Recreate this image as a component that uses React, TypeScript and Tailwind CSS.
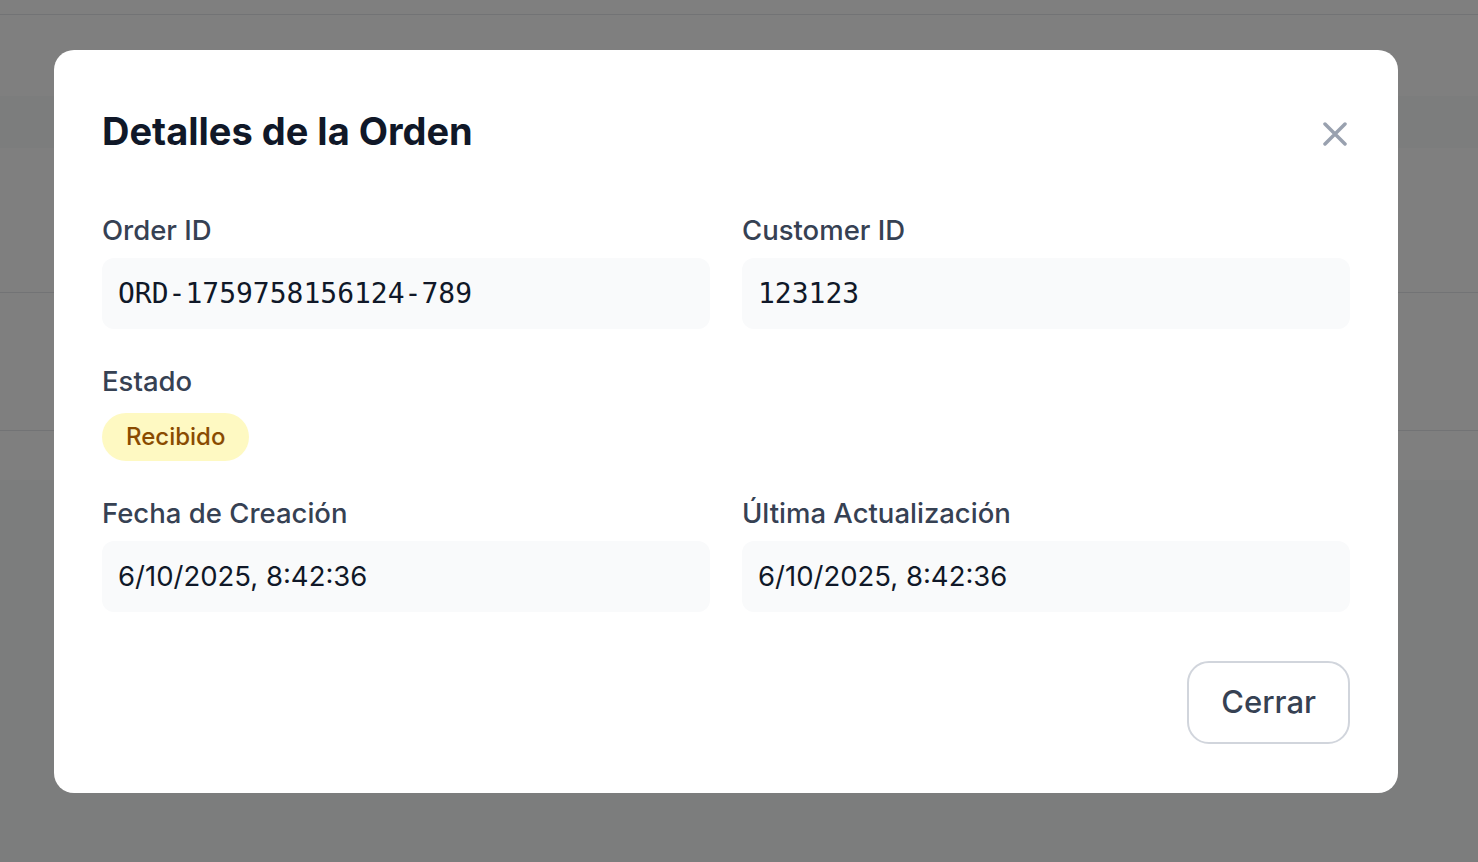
import React from "react";

const order = {
  id: "ORD-1759758156124-789",
  customerId: "123123",
  status: "Recibido",
  createdAt: "6/10/2025, 8:42:36",
  updatedAt: "6/10/2025, 8:42:36",
};

function Field({ label, value, mono }: { label: string; value: string; mono?: boolean }) {
  return (
    <div className="flex flex-col">
      <span className="text-[27.5px] leading-[32px] font-medium text-gray-700">{label}</span>
      <div
        className={`mt-3 h-[71px] rounded-xl bg-gray-50 px-4 flex items-center text-gray-900 ${
          mono ? "font-['DejaVu_Sans_Mono',monospace] text-[28px]" : "text-[27.5px]"
        }`}
      >
        {value}
      </div>
    </div>
  );
}

export default function App() {
  return (
    <div className="relative min-h-screen bg-gray-50 font-['Inter',sans-serif]">
      {/* page behind the modal */}
      <div className="h-[15px] bg-white border-b border-gray-200" />
      <div className="bg-white">
        <div className="h-[81px]" />
        <div className="h-[52px] bg-gray-50" />
        <div className="h-[145px] border-b border-gray-200" />
        <div className="h-[138px] border-b border-gray-200" />
        <div className="h-[49px]" />
      </div>

      {/* overlay */}
      <div className="fixed inset-0 bg-black/50 flex items-start pl-[54px] pt-[50px]">
        <div className="w-[1344px] bg-white rounded-[20px] px-12 pt-[61px] pb-[49px]">
          <div className="flex items-start justify-between">
            <h2 className="text-[38px] leading-[40px] font-bold text-gray-900">
              Detalles de la Orden
            </h2>
            <button className="mt-[11px] mr-[3px] text-gray-400" aria-label="Cerrar">
              <svg width="24" height="24" viewBox="0 0 24 24" fill="none" stroke="currentColor" strokeWidth="3.5" strokeLinecap="round">
                <path d="M2 2L22 22M22 2L2 22" />
              </svg>
            </button>
          </div>

          <div className="mt-[63px] grid grid-cols-2 gap-x-8">
            <Field label="Order ID" value={order.id} mono />
            <Field label="Customer ID" value={order.customerId} mono />
            <div className="col-span-2 mt-9 flex flex-col items-start">
              <span className="text-[27.5px] leading-[32px] font-medium text-gray-700">Estado</span>
              <span className="mt-4 h-[48px] px-6 rounded-full bg-yellow-100 text-yellow-800 text-[24px] font-medium flex items-center">
                {order.status}
              </span>
            </div>
            <div className="mt-9">
              <Field label="Fecha de Creación" value={order.createdAt} />
            </div>
            <div className="mt-9">
              <Field label="Última Actualización" value={order.updatedAt} />
            </div>
          </div>

          <div className="mt-[49px] flex justify-end">
            <button className="h-[83px] px-8 rounded-[22px] border-2 border-gray-300 text-[31px] font-medium text-gray-700">
              Cerrar
            </button>
          </div>
        </div>
      </div>
    </div>
  );
}
